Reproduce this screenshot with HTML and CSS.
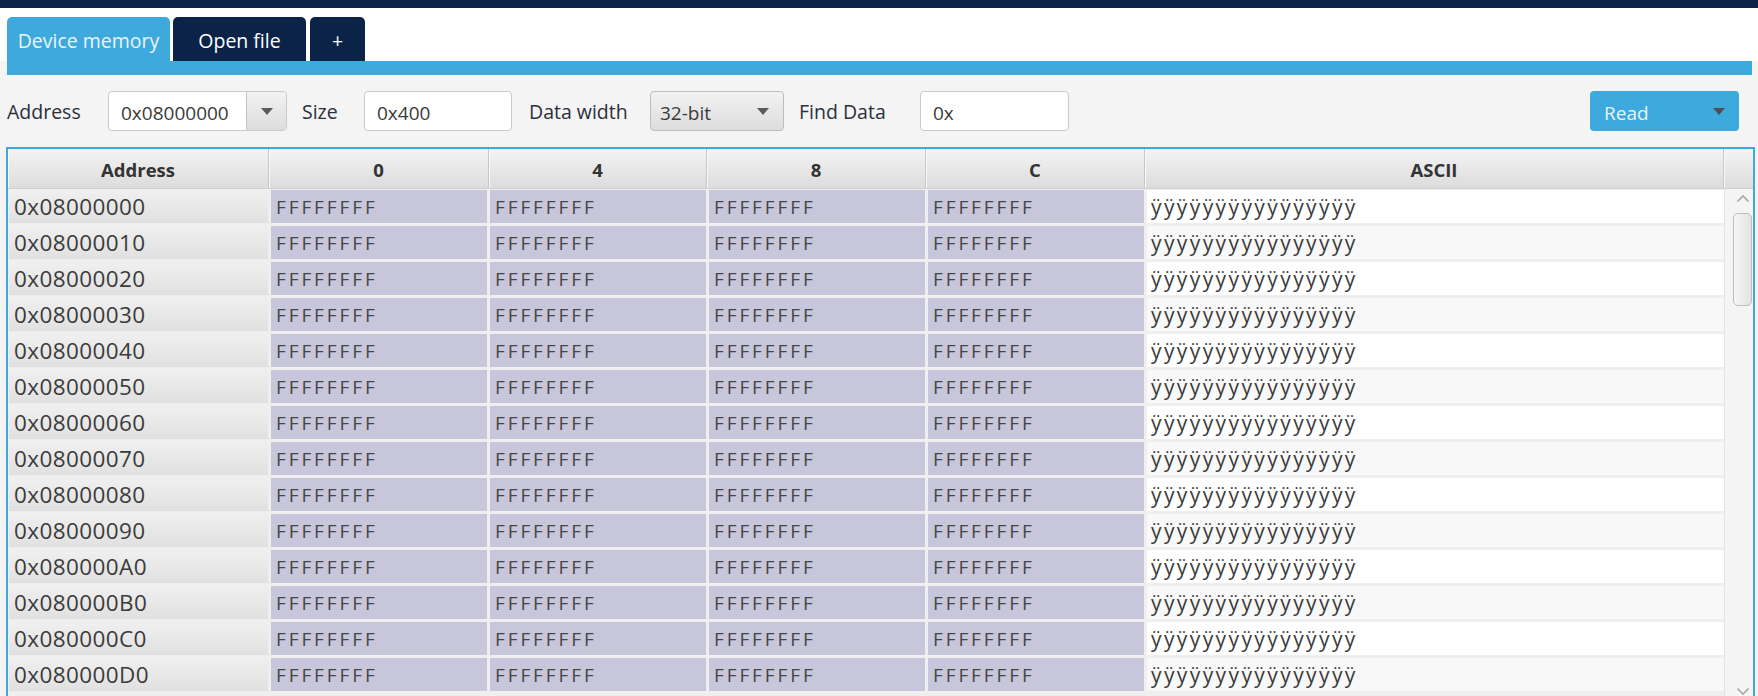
FILE: index.html
```html
<!DOCTYPE html>
<html>
<head>
<meta charset="utf-8">
<link rel="stylesheet" href="styles.css">
</head>
<body>
<div class="topbar"></div>
<div class="tabbar">
  <div class="tab tab-active">Device memory</div>
  <div class="tab tab-file">Open file</div>
  <div class="tab tab-plus">+</div>
</div>
<div class="strip"></div>
<div class="toolbar">
  <div class="lbl lbl-address">Address</div>
  <div class="combo combo-address">
    <div class="combo-text">0x08000000</div>
    <div class="combo-btn"><span class="tri"></span></div>
  </div>
  <div class="lbl lbl-size">Size</div>
  <div class="input input-size">0x400</div>
  <div class="lbl lbl-width">Data width</div>
  <div class="combo combo-width">
    <div class="combo-text">32-bit</div>
    <span class="tri"></span>
  </div>
  <div class="lbl lbl-find">Find Data</div>
  <div class="input input-find">0x</div>
  <div class="spacer"></div>
  <div class="read-btn"><span class="read-text">Read</span><span class="tri tri-dark"></span></div>
</div>
<div class="table">
  <div class="thead">
    <div class="th">Address</div>
    <div class="th">0</div>
    <div class="th">4</div>
    <div class="th">8</div>
    <div class="th">C</div>
    <div class="th">ASCII</div>
    <div class="th th-corner"></div>
  </div>
  <div class="tbody">
    <div class="rows" id="rows">
      <div class="row"><div class="c-addr">0x08000000</div><div class="c-data">FFFFFFFF</div><div class="c-data">FFFFFFFF</div><div class="c-data">FFFFFFFF</div><div class="c-data">FFFFFFFF</div><div class="c-ascii">ÿÿÿÿÿÿÿÿÿÿÿÿÿÿÿÿ</div></div>
      <div class="row alt"><div class="c-addr">0x08000010</div><div class="c-data">FFFFFFFF</div><div class="c-data">FFFFFFFF</div><div class="c-data">FFFFFFFF</div><div class="c-data">FFFFFFFF</div><div class="c-ascii">ÿÿÿÿÿÿÿÿÿÿÿÿÿÿÿÿ</div></div>
      <div class="row"><div class="c-addr">0x08000020</div><div class="c-data">FFFFFFFF</div><div class="c-data">FFFFFFFF</div><div class="c-data">FFFFFFFF</div><div class="c-data">FFFFFFFF</div><div class="c-ascii">ÿÿÿÿÿÿÿÿÿÿÿÿÿÿÿÿ</div></div>
      <div class="row alt"><div class="c-addr">0x08000030</div><div class="c-data">FFFFFFFF</div><div class="c-data">FFFFFFFF</div><div class="c-data">FFFFFFFF</div><div class="c-data">FFFFFFFF</div><div class="c-ascii">ÿÿÿÿÿÿÿÿÿÿÿÿÿÿÿÿ</div></div>
      <div class="row"><div class="c-addr">0x08000040</div><div class="c-data">FFFFFFFF</div><div class="c-data">FFFFFFFF</div><div class="c-data">FFFFFFFF</div><div class="c-data">FFFFFFFF</div><div class="c-ascii">ÿÿÿÿÿÿÿÿÿÿÿÿÿÿÿÿ</div></div>
      <div class="row alt"><div class="c-addr">0x08000050</div><div class="c-data">FFFFFFFF</div><div class="c-data">FFFFFFFF</div><div class="c-data">FFFFFFFF</div><div class="c-data">FFFFFFFF</div><div class="c-ascii">ÿÿÿÿÿÿÿÿÿÿÿÿÿÿÿÿ</div></div>
      <div class="row"><div class="c-addr">0x08000060</div><div class="c-data">FFFFFFFF</div><div class="c-data">FFFFFFFF</div><div class="c-data">FFFFFFFF</div><div class="c-data">FFFFFFFF</div><div class="c-ascii">ÿÿÿÿÿÿÿÿÿÿÿÿÿÿÿÿ</div></div>
      <div class="row alt"><div class="c-addr">0x08000070</div><div class="c-data">FFFFFFFF</div><div class="c-data">FFFFFFFF</div><div class="c-data">FFFFFFFF</div><div class="c-data">FFFFFFFF</div><div class="c-ascii">ÿÿÿÿÿÿÿÿÿÿÿÿÿÿÿÿ</div></div>
      <div class="row"><div class="c-addr">0x08000080</div><div class="c-data">FFFFFFFF</div><div class="c-data">FFFFFFFF</div><div class="c-data">FFFFFFFF</div><div class="c-data">FFFFFFFF</div><div class="c-ascii">ÿÿÿÿÿÿÿÿÿÿÿÿÿÿÿÿ</div></div>
      <div class="row alt"><div class="c-addr">0x08000090</div><div class="c-data">FFFFFFFF</div><div class="c-data">FFFFFFFF</div><div class="c-data">FFFFFFFF</div><div class="c-data">FFFFFFFF</div><div class="c-ascii">ÿÿÿÿÿÿÿÿÿÿÿÿÿÿÿÿ</div></div>
      <div class="row"><div class="c-addr">0x080000A0</div><div class="c-data">FFFFFFFF</div><div class="c-data">FFFFFFFF</div><div class="c-data">FFFFFFFF</div><div class="c-data">FFFFFFFF</div><div class="c-ascii">ÿÿÿÿÿÿÿÿÿÿÿÿÿÿÿÿ</div></div>
      <div class="row alt"><div class="c-addr">0x080000B0</div><div class="c-data">FFFFFFFF</div><div class="c-data">FFFFFFFF</div><div class="c-data">FFFFFFFF</div><div class="c-data">FFFFFFFF</div><div class="c-ascii">ÿÿÿÿÿÿÿÿÿÿÿÿÿÿÿÿ</div></div>
      <div class="row"><div class="c-addr">0x080000C0</div><div class="c-data">FFFFFFFF</div><div class="c-data">FFFFFFFF</div><div class="c-data">FFFFFFFF</div><div class="c-data">FFFFFFFF</div><div class="c-ascii">ÿÿÿÿÿÿÿÿÿÿÿÿÿÿÿÿ</div></div>
      <div class="row alt"><div class="c-addr">0x080000D0</div><div class="c-data">FFFFFFFF</div><div class="c-data">FFFFFFFF</div><div class="c-data">FFFFFFFF</div><div class="c-data">FFFFFFFF</div><div class="c-ascii">ÿÿÿÿÿÿÿÿÿÿÿÿÿÿÿÿ</div></div>
    </div>
    <div class="vscroll">
      <svg class="chev chev-up" width="14" height="9" viewBox="0 0 14 9"><path d="M1.5 7.5 L7 2 L12.5 7.5" fill="none" stroke="#a8a8a8" stroke-width="1.6"/></svg>
      <div class="thumb"></div>
      <div class="scroll-fill"></div>
      <svg class="chev chev-down" width="14" height="9" viewBox="0 0 14 9"><path d="M1.5 1.5 L7 7 L12.5 1.5" fill="none" stroke="#a8a8a8" stroke-width="1.6"/></svg>
    </div>
  </div>
</div>
</body>
</html>
```
FILE: styles.css
```css
* { box-sizing: border-box; }
html, body {
  margin: 0;
  padding: 0;
}
body {
  width: 1758px;
  height: 696px;
  overflow: hidden;
  background: #f4f4f4;
  font-family: "Open Sans", "Noto Sans", sans-serif;
  color: #333;
}
.topbar {
  height: 8px;
  background: #0b2347;
}
.tabbar {
  height: 53px;
  background: #ffffff;
  display: flex;
  align-items: flex-end;
  padding-left: 7px;
}
.tab {
  height: 44px;
  border-radius: 5px 5px 0 0;
  display: flex;
  align-items: center;
  justify-content: center;
  font-size: 19.5px;
  color: #ffffff;
  background: #0b2347;
  padding-top: 2px;
}
.tab-active {
  width: 163px;
  background: #3da9dc;
  color: #eaf5fc;
}
.tab-file {
  width: 133px;
  margin-left: 3px;
}
.tab-plus {
  width: 55px;
  margin-left: 4px;
}
.strip {
  height: 14px;
  margin: 0 6px 0 7px;
  background: #3da9dc;
}
.toolbar {
  height: 72px;
  display: flex;
  align-items: center;
  padding: 0 19px 0 7px;
}
.lbl {
  font-size: 19.5px;
  color: #2b2f3a;
  padding-top: 1px;
}
.lbl-address { width: 101px; }
.lbl-size { width: 62px; margin-left: 15px; }
.lbl-width { width: 121px; margin-left: 17px; }
.lbl-find { width: 121px; margin-left: 15px; }
.input, .combo {
  height: 40px;
  border: 1px solid #cacaca;
  border-radius: 4px;
  background: #ffffff;
  font-size: 19px;
  color: #3a3a3a;
  display: flex;
  align-items: center;
}
.input {
  padding: 3px 0 0 12px;
}
.input-size { width: 148px; }
.input-find { width: 149px; }
.combo-address {
  width: 179px;
  overflow: hidden;
}
.combo-text {
  flex: 1;
  padding: 3px 0 0 12px;
}
.combo-btn {
  width: 40px;
  height: 100%;
  border-left: 1px solid #c4c4c4;
  background: linear-gradient(#f3f3f3, #dcdcdc);
  display: flex;
  align-items: center;
  justify-content: center;
}
.tri {
  width: 0;
  height: 0;
  border-left: 6px solid transparent;
  border-right: 6px solid transparent;
  border-top: 7px solid #5a5a5a;
}
.combo-width {
  width: 134px;
  background: linear-gradient(#f2f2f2, #dddddd);
  border-color: #bdbdbd;
  padding-right: 14px;
}
.combo-width .combo-text { padding-left: 9px; }
.spacer { flex: 1; }
.read-btn {
  width: 149px;
  height: 40px;
  border-radius: 4px;
  background: #3da9dc;
  color: #e8f4fb;
  font-size: 19px;
  display: flex;
  align-items: center;
  justify-content: space-between;
  padding: 0 14px 0 14px;
}
.read-text { padding-top: 3px; }
.tri-dark { border-top-color: #4f4f4f; }

.table {
  margin: 0 3px 0 6px;
  height: 560px;
  border: 2px solid #3da9dc;
  border-bottom: none;
  background: #efefef;
  overflow: hidden;
}
.thead {
  display: grid;
  grid-template-columns: 261px 220px 218px 219px 219px 579px 1fr;
  height: 40px;
  background: linear-gradient(#f4f4f4, #dcdcdc);
  border-bottom: 1px solid #cfcfcf;
}
.th {
  display: flex;
  align-items: center;
  justify-content: center;
  font-size: 18.5px;
  font-weight: 700;
  color: #333333;
  border-right: 1px solid #c7c7c7;
  box-shadow: inset 1px 0 0 #fafafa;
  padding-top: 2px;
}
.th-corner { border-right: none; }
.tbody {
  display: flex;
  height: 520px;
}
.rows {
  width: 1716px;
  padding: 1px 0 0 1px;
  display: flex;
  flex-direction: column;
  gap: 3px;
}
.row {
  display: grid;
  grid-template-columns: 259px 216px 216px 216px 216px 1fr;
  column-gap: 3px;
  height: 33px;
}
.row > div {
  display: flex;
  align-items: center;
  white-space: nowrap;
  overflow: hidden;
}
.c-addr {
  background: linear-gradient(#f0f0f0, #e0e0e0);
  font-size: 22.5px;
  letter-spacing: 0.4px;
  color: #3b3b3b;
  padding-left: 5px;
}
.c-data {
  background: #c8c6da;
  font-size: 19px;
  letter-spacing: 2.9px;
  color: #454545;
  padding-left: 5px;
}
.c-ascii {
  background: #ffffff;
  font-size: 21px;
  letter-spacing: 2.4px;
  color: #3b3b3b;
  padding-left: 4px;
}
.row.alt .c-ascii { background: #f8f8f8; }
.vscroll {
  flex: 1;
  background: #f4f4f4;
  border-left: 1px solid #e4e4e4;
  display: flex;
  flex-direction: column;
  align-items: center;
  padding: 0 1px 0 8px;
}
.chev { display: block; flex: none; }
.chev-up { margin-top: 5px; }
.thumb {
  flex: none;
  width: 100%;
  height: 93px;
  margin-top: 10px;
  border: 1px solid #bdbdbd;
  border-radius: 5px;
  background: linear-gradient(90deg, #f6f6f6, #e2e2e2);
}
.scroll-fill { flex: 1; }
.chev-down { margin-bottom: 13px; }
```
